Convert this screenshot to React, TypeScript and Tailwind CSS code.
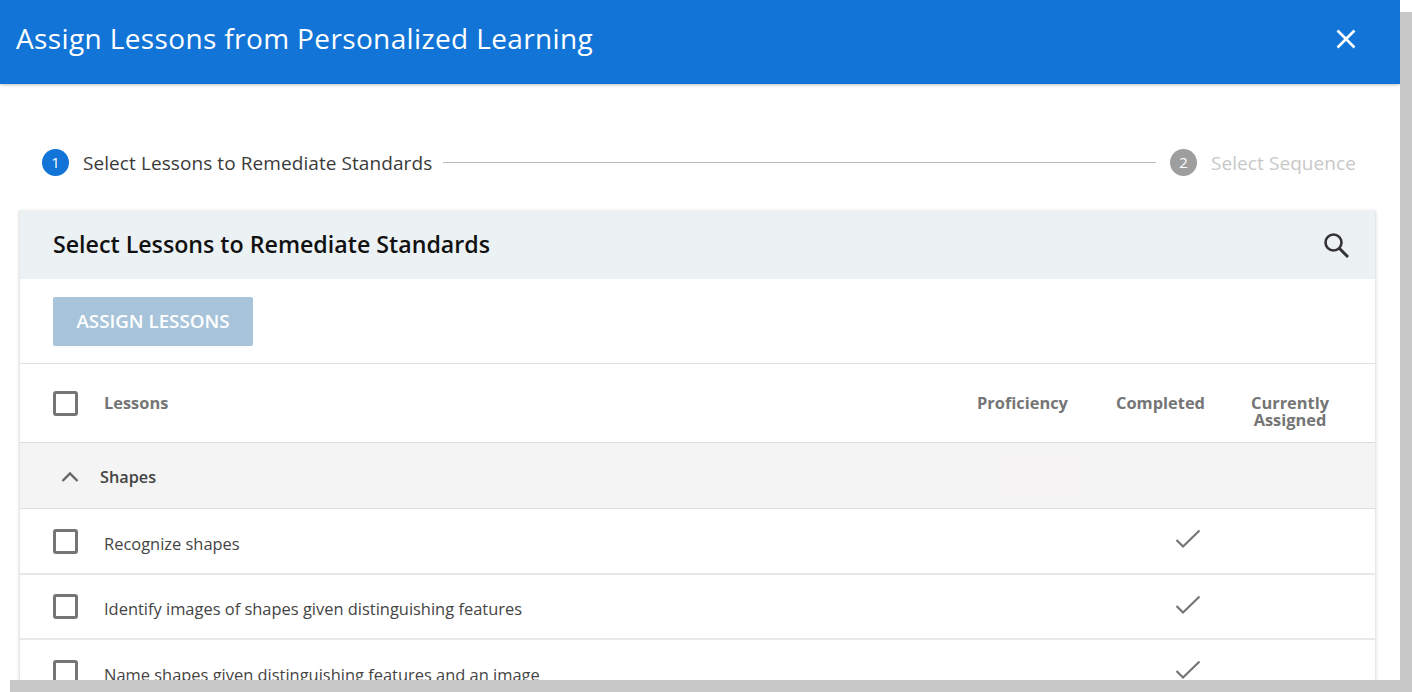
import React from 'react';

const lessons = [
  'Recognize shapes',
  'Identify images of shapes given distinguishing features',
  'Name shapes given distinguishing features and an image',
];

const CheckBox: React.FC = () => (
  <div className="w-[25px] h-[25px] rounded-[3px] border-[3px] border-[#757575] bg-white flex-shrink-0" />
);

const CheckMark: React.FC = () => (
  <svg width="26" height="20" viewBox="0 0 26 20" fill="none">
    <path d="M1.5 11 L8 17.5 L24.5 1.5" stroke="#757575" strokeWidth="2.2" />
  </svg>
);

const App: React.FC = () => {
  return (
    <div className="w-[1412px] h-[692px] overflow-hidden bg-white flex flex-col font-['Open_Sans',sans-serif]">
      <div className="flex h-[680px] flex-shrink-0">
        <div className="w-[1400px] flex flex-col overflow-hidden bg-white">
          {/* Header */}
          <header className="h-[84px] flex-shrink-0 bg-[#1174d6] flex items-center justify-between pl-4 pr-[42px] shadow-[0_1px_3px_rgba(0,0,0,0.25)] z-10">
            <h1 className="text-[28px] leading-none text-white tracking-[0.37px] -mt-[8px]">Assign Lessons from Personalized Learning</h1>
            <svg width="24" height="24" viewBox="0 0 24 24" fill="none" className="-mt-[6px]">
              <path d="M3.5 3.5 L20.5 20.5 M20.5 3.5 L3.5 20.5" stroke="#fff" strokeWidth="2.6" />
            </svg>
          </header>

          {/* Stepper */}
          <div className="h-[127px] flex-shrink-0 flex items-center pl-[42px] pr-[44px] pt-[30px]">
            <div className="w-[27px] h-[27px] rounded-full bg-[#1174d6] text-white text-[15px] flex items-center justify-center">1</div>
            <span className="ml-[14px] text-[19px] tracking-[0.08px] leading-[28px] mt-[1px] text-[#3a3a3a]">Select Lessons to Remediate Standards</span>
            <div className="flex-1 h-px bg-[#bdbdbd] mx-[11px]" />
            <div className="w-[27px] h-[27px] rounded-full bg-[#9e9e9e] text-white text-[15px] flex items-center justify-center ml-[3px]">2</div>
            <span className="ml-[14px] text-[19px] tracking-[0.08px] leading-[28px] mt-[1px] text-[#c8c8c8]">Select Sequence</span>
          </div>

          {/* Card */}
          <div className="ml-[19px] w-[1357px] flex-1 bg-white border-x border-[#e8e8e8] shadow-[0_0_3px_rgba(0,0,0,0.15)] overflow-hidden">
            <div className="h-[68px] bg-[#ecf1f4] flex items-center justify-between pl-[33px] pr-[24px]">
              <h2 className="text-[23.2px] leading-[32px] -mt-[2px] font-semibold text-[#111111]">Select Lessons to Remediate Standards</h2>
              <svg width="30" height="30" viewBox="0 0 30 30" fill="none">
                <circle cx="12.5" cy="12.5" r="8" stroke="#333" strokeWidth="2.6" />
                <path d="M18.5 18.5 L27 27" stroke="#333" strokeWidth="3" />
              </svg>
            </div>

            <div className="h-[85px] flex items-start pl-[33px] pt-[18px] border-b border-[#dedede]">
              <button className="w-[200px] h-[49px] rounded-[2px] bg-[#a8c4db] text-white text-[18.8px] font-semibold">ASSIGN LESSONS</button>
            </div>

            {/* Table head */}
            <div className="h-[79px] flex items-center pl-[33px] border-b border-[#dedede] text-[16.4px] font-bold text-[#757575]">
              <CheckBox />
              <span className="ml-[26px] flex-1">Lessons</span>
              <span className="w-[139px] text-center">Proficiency</span>
              <span className="w-[137px] text-center">Completed</span>
              <span className="w-[122px] mr-[24px] mt-[15px] text-center leading-[17px]">Currently<br />Assigned</span>
            </div>

            {/* Group */}
            <div className="h-[66px] flex items-center pl-[41px] bg-[#f4f4f4] border-b border-[#dedede]">
              <svg width="18" height="12" viewBox="0 0 18 12" fill="none" className="mt-[3px]">
                <path d="M1.5 10 L9 2.5 L16.5 10" stroke="#666" strokeWidth="2.4" />
              </svg>
              <span className="ml-[21px] mt-[4px] text-[16.3px] font-semibold text-[#444444]">Shapes</span>
              <div className="ml-[840px] mt-[1px] w-[88px] h-[36px] bg-[#f5f3f3]" />
            </div>

            {lessons.map(lesson => (
              <div key={lesson} className="h-[65.5px] flex items-center pl-[33px] border-b-2 border-[#e8e8e8]">
                <div className="mt-[1px]"><CheckBox /></div>
                <span className="ml-[26px] flex-1 pt-[7px] text-[16.45px] text-[#444444]">{lesson}</span>
                <div className="w-[26px] mr-[174px] -mt-[3px]"><CheckMark /></div>
              </div>
            ))}
          </div>
        </div>
        <div className="w-3 mt-3 bg-[#c8c8c8]" />
      </div>
      <div className="ml-[10px] h-3 bg-[#c8c8c8]" />
    </div>
  );
};

export default App;
